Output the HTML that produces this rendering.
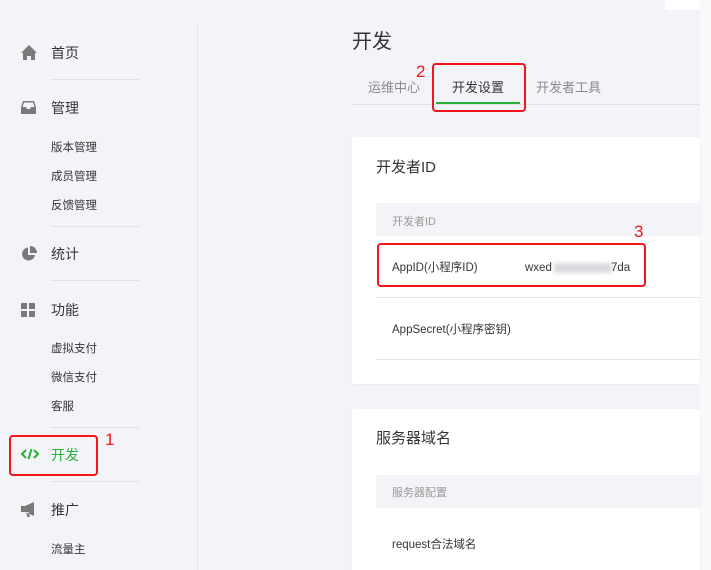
<!DOCTYPE html>
<html><head><meta charset="utf-8"><style>
*{margin:0;padding:0;box-sizing:border-box}
html,body{overflow:hidden}
body{width:711px;height:570px;background:#f3f4f8;font-family:"Liberation Sans","Noto Sans CJK SC",sans-serif;position:relative;color:#353535}
.a{position:absolute;white-space:nowrap}
.sep{position:absolute;left:51px;width:89px;height:1px;background:#e1e2e6}
.m{font-size:14px;color:#353535;left:51px}
.s{font-size:11.5px;color:#353535;left:51px}
.ic{position:absolute;left:21px}
.red{position:absolute;border:2.5px solid #f5141a;border-radius:4px}
.rn{position:absolute;color:#f5141a;font-size:17px}
.card{position:absolute;left:352px;width:348px;background:#fff;border-radius:3px;box-shadow:0 1px 2px rgba(0,0,0,.05)}
</style></head><body>
<div class="a" style="left:197px;top:24px;width:1px;height:546px;background:#e4e5e9"></div>
<div class="a" style="left:665px;top:0;width:46px;height:10px;background:#fff;border-radius:0 0 0 3px"></div>
<div class="a" style="left:700px;top:0;width:11px;height:570px;background:#f8f9fb"></div>

<svg class="ic" style="top:45px" width="16" height="15" viewBox="0 0 16 15"><path d="M8 0L0 8h2v7h4v-4h4v4h4V8h2z" fill="#7a7a7a"/></svg>
<div class="a m" style="top:43px">首页</div>
<div class="sep" style="top:79px"></div>
<svg class="ic" style="top:101px" width="15" height="13" viewBox="0 0 15 13"><path d="M2 0h11l2 6v7H0V6zM1.5 6h3.5l1 2h3l1-2h3.5L12 1.5H3z" fill="#7a7a7a"/></svg>
<div class="a m" style="top:98px">管理</div>
<div class="a s" style="top:139px">版本管理</div>
<div class="a s" style="top:168px">成员管理</div>
<div class="a s" style="top:197px">反馈管理</div>
<div class="sep" style="top:226px"></div>
<svg class="ic" style="top:246px" width="16" height="16" viewBox="0 0 16 16"><path d="M7 1.5A6.5 6.5 0 1 0 14 9H7z" fill="#7a7a7a"/><path d="M9 0v7h7A7 7 0 0 0 9 0z" fill="#7a7a7a"/></svg>
<div class="a m" style="top:244px">统计</div>
<div class="sep" style="top:280px"></div>
<svg class="ic" style="top:303px" width="14" height="14" viewBox="0 0 14 14"><rect width="6" height="6" fill="#7a7a7a"/><rect x="8" width="6" height="6" fill="#7a7a7a"/><rect y="8" width="6" height="6" fill="#7a7a7a"/><rect x="8" y="8" width="6" height="6" fill="#7a7a7a"/></svg>
<div class="a m" style="top:300px">功能</div>
<div class="a s" style="top:340px">虚拟支付</div>
<div class="a s" style="top:369px">微信支付</div>
<div class="a s" style="top:398px">客服</div>
<div class="sep" style="top:427px"></div>
<svg class="ic" style="top:448px" width="18" height="12" viewBox="0 0 18 12"><path d="M5 2L1 6l4 4M13 2l4 4-4 4M10.5 1L7.5 11" stroke="#2aae3a" stroke-width="2" fill="none"/></svg>
<div class="a m" style="top:445px;color:#2aae3a">开发</div>
<div class="red" style="left:9px;top:435px;width:89px;height:41px"></div>
<div class="rn" style="left:105px;top:430px">1</div>
<div class="sep" style="top:481px"></div>
<svg class="ic" style="top:502px" width="17" height="15" viewBox="0 0 17 15"><path d="M0 4h4l9-4v14L4 10H0zM5 10l1.5 5h2.5l-1.5-5z" fill="#7a7a7a"/></svg>
<div class="a m" style="top:500px">推广</div>
<div class="a s" style="top:541px">流量主</div>

<div class="a" style="left:352px;top:25px;font-size:20px;color:#353535">开发</div>
<div class="a" style="left:368px;top:77px;font-size:13px;color:#8a8a8a">运维中心</div>
<div class="a" style="left:452px;top:77px;font-size:13px;color:#353535">开发设置</div>
<div class="a" style="left:536px;top:77px;font-size:13px;color:#8a8a8a">开发者工具</div>
<div class="a" style="left:352px;top:104px;width:348px;height:1px;background:#e1e2e6"></div>
<div class="a" style="left:436px;top:102px;width:84px;height:2px;background:#2aae3a"></div>
<div class="red" style="left:432px;top:63px;width:94px;height:49px"></div>
<div class="rn" style="left:416px;top:62px">2</div>

<div class="card" style="top:137px;height:247px">
<div class="a" style="left:24px;top:19px;font-size:15px">开发者ID</div>
<div class="a" style="left:24px;top:66px;width:324px;height:33px;background:#f3f4f7"></div>
<div class="a" style="left:40px;top:76px;font-size:11px;color:#9a9a9a">开发者ID</div>
<div class="a" style="left:40px;top:122px;font-size:11.5px">AppID(小程序ID)</div>
<div class="a" style="left:173px;top:124px;font-size:11.5px;line-height:14px">wxed</div>
<div class="a" style="left:202px;top:126px;width:58px;height:10px;background:#d8d9de;filter:blur(2px)"></div>
<div class="a" style="left:259px;top:124px;font-size:11.5px;line-height:14px">7da</div>
<div class="a" style="left:24px;top:160px;width:324px;height:1px;background:#e6e7ea"></div>
<div class="a" style="left:40px;top:184px;font-size:11.5px">AppSecret(小程序密钥)</div>
<div class="a" style="left:24px;top:222px;width:324px;height:1px;background:#e6e7ea"></div>
</div>
<div class="red" style="left:377px;top:243px;width:269px;height:44px"></div>
<div class="rn" style="left:634px;top:222px">3</div>

<div class="card" style="top:409px;height:170px">
<div class="a" style="left:24px;top:18px;font-size:15px">服务器域名</div>
<div class="a" style="left:24px;top:66px;width:324px;height:33px;background:#f3f4f7"></div>
<div class="a" style="left:40px;top:75px;font-size:11px;color:#9a9a9a">服务器配置</div>
<div class="a" style="left:40px;top:127px;font-size:11.5px">request合法域名</div>
</div>
</body></html>
